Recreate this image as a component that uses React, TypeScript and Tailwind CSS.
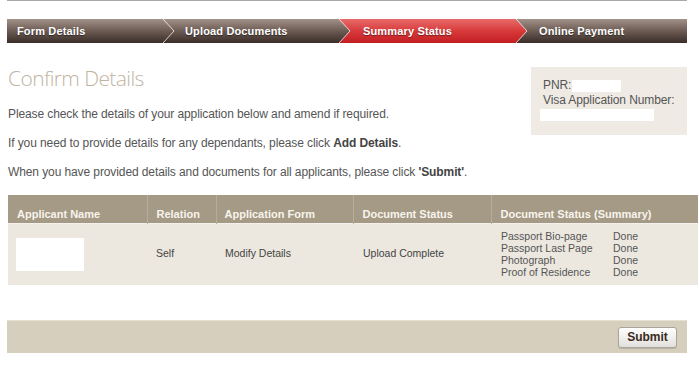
import React from 'react'

const tabs = [
  { label: 'Form Details', width: 'w-[156px]', pad: 'pl-[10px]', active: false, arrow: true },
  { label: 'Upload Documents', width: 'w-[176px]', pad: 'pl-[22px]', active: false, arrow: true },
  { label: 'Summary Status', width: 'w-[177px]', pad: 'pl-[24px]', active: true, arrow: true },
  { label: 'Online Payment', width: 'w-[171px]', pad: 'pl-[23px]', active: false, arrow: false },
]

function Arrow({ active, id }: { active: boolean; id: string }) {
  return (
    <svg className="absolute left-full top-0 z-10 h-[24px] w-[12px] overflow-visible" viewBox="0 0 12 24">
      <defs>
        <linearGradient id={id} x1="0" y1="0" x2="0" y2="1">
          {active ? (
            <>
              <stop offset="0" stopColor="#e76a6a" />
              <stop offset="0.5" stopColor="#d8393b" />
              <stop offset="1" stopColor="#c21d22" />
            </>
          ) : (
            <>
              <stop offset="0" stopColor="#a39289" />
              <stop offset="0.5" stopColor="#6c5b53" />
              <stop offset="1" stopColor="#3a2e29" />
            </>
          )}
        </linearGradient>
      </defs>
      <polygon points="0,0 11,12 0,24" fill={`url(#${id})`} />
      <polyline points="0,0 11,12 0,24" fill="none" stroke="#ffffff" strokeOpacity="0.75" strokeWidth="1" />
    </svg>
  )
}

const docs = ['Passport Bio-page', 'Passport Last Page', 'Photograph', 'Proof of Residence']

export default function App() {
  return (
    <div className="w-[699px] h-[379px] bg-white font-['Liberation_Sans',Arial,sans-serif] overflow-hidden">
      <div className="ml-[7px] w-[680px]">
        <div className="h-px bg-[#a9a9a9]" />

        {/* steps */}
        <div className="mt-[18px] flex h-[24px]">
          {tabs.map((t, i) => (
            <div
              key={t.label}
              className={`relative ${t.width} ${t.pad} flex items-center text-[11px] tracking-[0.15px] font-bold text-white [text-shadow:0_1px_1px_rgba(0,0,0,0.45)] ${
                t.active
                  ? 'bg-linear-to-b from-[#e76a6a] via-[#d8393b] to-[#c21d22]'
                  : 'bg-linear-to-b from-[#a39289] via-[#6c5b53] to-[#3a2e29]'
              }`}
            >
              <span className="relative z-20">{t.label}</span>
              {t.arrow && <Arrow active={t.active} id={`arr-${i}`} />}
            </div>
          ))}
        </div>

        {/* intro */}
        <div className="mt-[22px] flex justify-between">
          <div className="pl-px">
            <h1 className="font-['Open_Sans',sans-serif] text-[21px] leading-[26px] font-light text-[#bfb4a3] tracking-[-0.6px]">
              Confirm Details
            </h1>
            <div className="text-[12px] leading-[15px] text-[#555] tracking-[-0.1px]">
              <p className="mt-[16px]">Please check the details of your application below and amend if required.</p>
              <p className="mt-[14px]">
                If you need to provide details for any dependants, please click <b className="text-[#444]">Add Details</b>.
              </p>
              <p className="mt-[14px]">
                When you have provided details and documents for all applicants, please click{' '}
                <b className="text-[#444]">'Submit'</b>.
              </p>
            </div>
          </div>
          <div className="mt-[2px] w-[156px] h-[68px] bg-[#efebe4] pl-[12px] pt-[11px] text-[12px] leading-[15px] text-[#555] tracking-[-0.1px]">
            <div className="flex items-center">
              PNR:
              <span className="ml-[1px] inline-block h-[12px] w-[49px] bg-white" />
            </div>
            <div>Visa Application Number:</div>
            <div className="ml-[-3px] mt-px h-[12px] w-[114px] bg-white" />
          </div>
        </div>
      </div>

      {/* table */}
      <table className="mt-[15px] ml-[8px] w-[690px] border-collapse text-left">
        <thead>
          <tr className="h-[28px] bg-[#a59a86] text-[11px] text-[#f8f4ec]">
            <th className="w-[139px] pl-[9px] pt-[10px] font-bold">Applicant Name</th>
            <th className="w-[69px] border-l border-[#b6ad9b] pl-[9px] pt-[10px] font-bold">Relation</th>
            <th className="w-[137px] border-l border-[#b6ad9b] pl-[8px] pt-[10px] font-bold">Application Form</th>
            <th className="w-[138px] border-l border-[#b6ad9b] pl-[9px] pt-[10px] font-bold">Document Status</th>
            <th className="border-l border-[#b6ad9b] pl-[9px] pt-[10px] font-bold">Document Status (Summary)</th>
          </tr>
        </thead>
        <tbody>
          <tr className="h-[62px] border-t border-[#f4f1ec] bg-[#ece8e0] text-[10.5px] text-[#444]">
            <td className="pl-[8px]">
              <div className="h-[33px] w-[68px] bg-white" />
            </td>
            <td className="pl-[9px]">Self</td>
            <td className="pl-[9px]">Modify Details</td>
            <td className="pl-[10px]">Upload Complete</td>
            <td className="pl-[10px] text-[#555]">
              <div className="leading-[12px]">
                {docs.map((d) => (
                  <div key={d} className="flex">
                    <span className="w-[112px]">{d}</span>
                    <span>Done</span>
                  </div>
                ))}
              </div>
            </td>
          </tr>
        </tbody>
      </table>

      {/* footer */}
      <div className="mt-[35px] ml-[7px] flex h-[33px] w-[680px] items-center justify-end border-t border-[#e6e0d3] bg-[#d6cfbe] pr-[10px]">
        <button className="h-[21px] w-[59px] rounded-[3px] border border-[#a9a59e] bg-linear-to-b from-white to-[#e2e0dc] text-[12px] font-bold text-[#3a2a20] shadow-[0_1px_1px_rgba(0,0,0,0.15)]">
          Submit
        </button>
      </div>
    </div>
  )
}
